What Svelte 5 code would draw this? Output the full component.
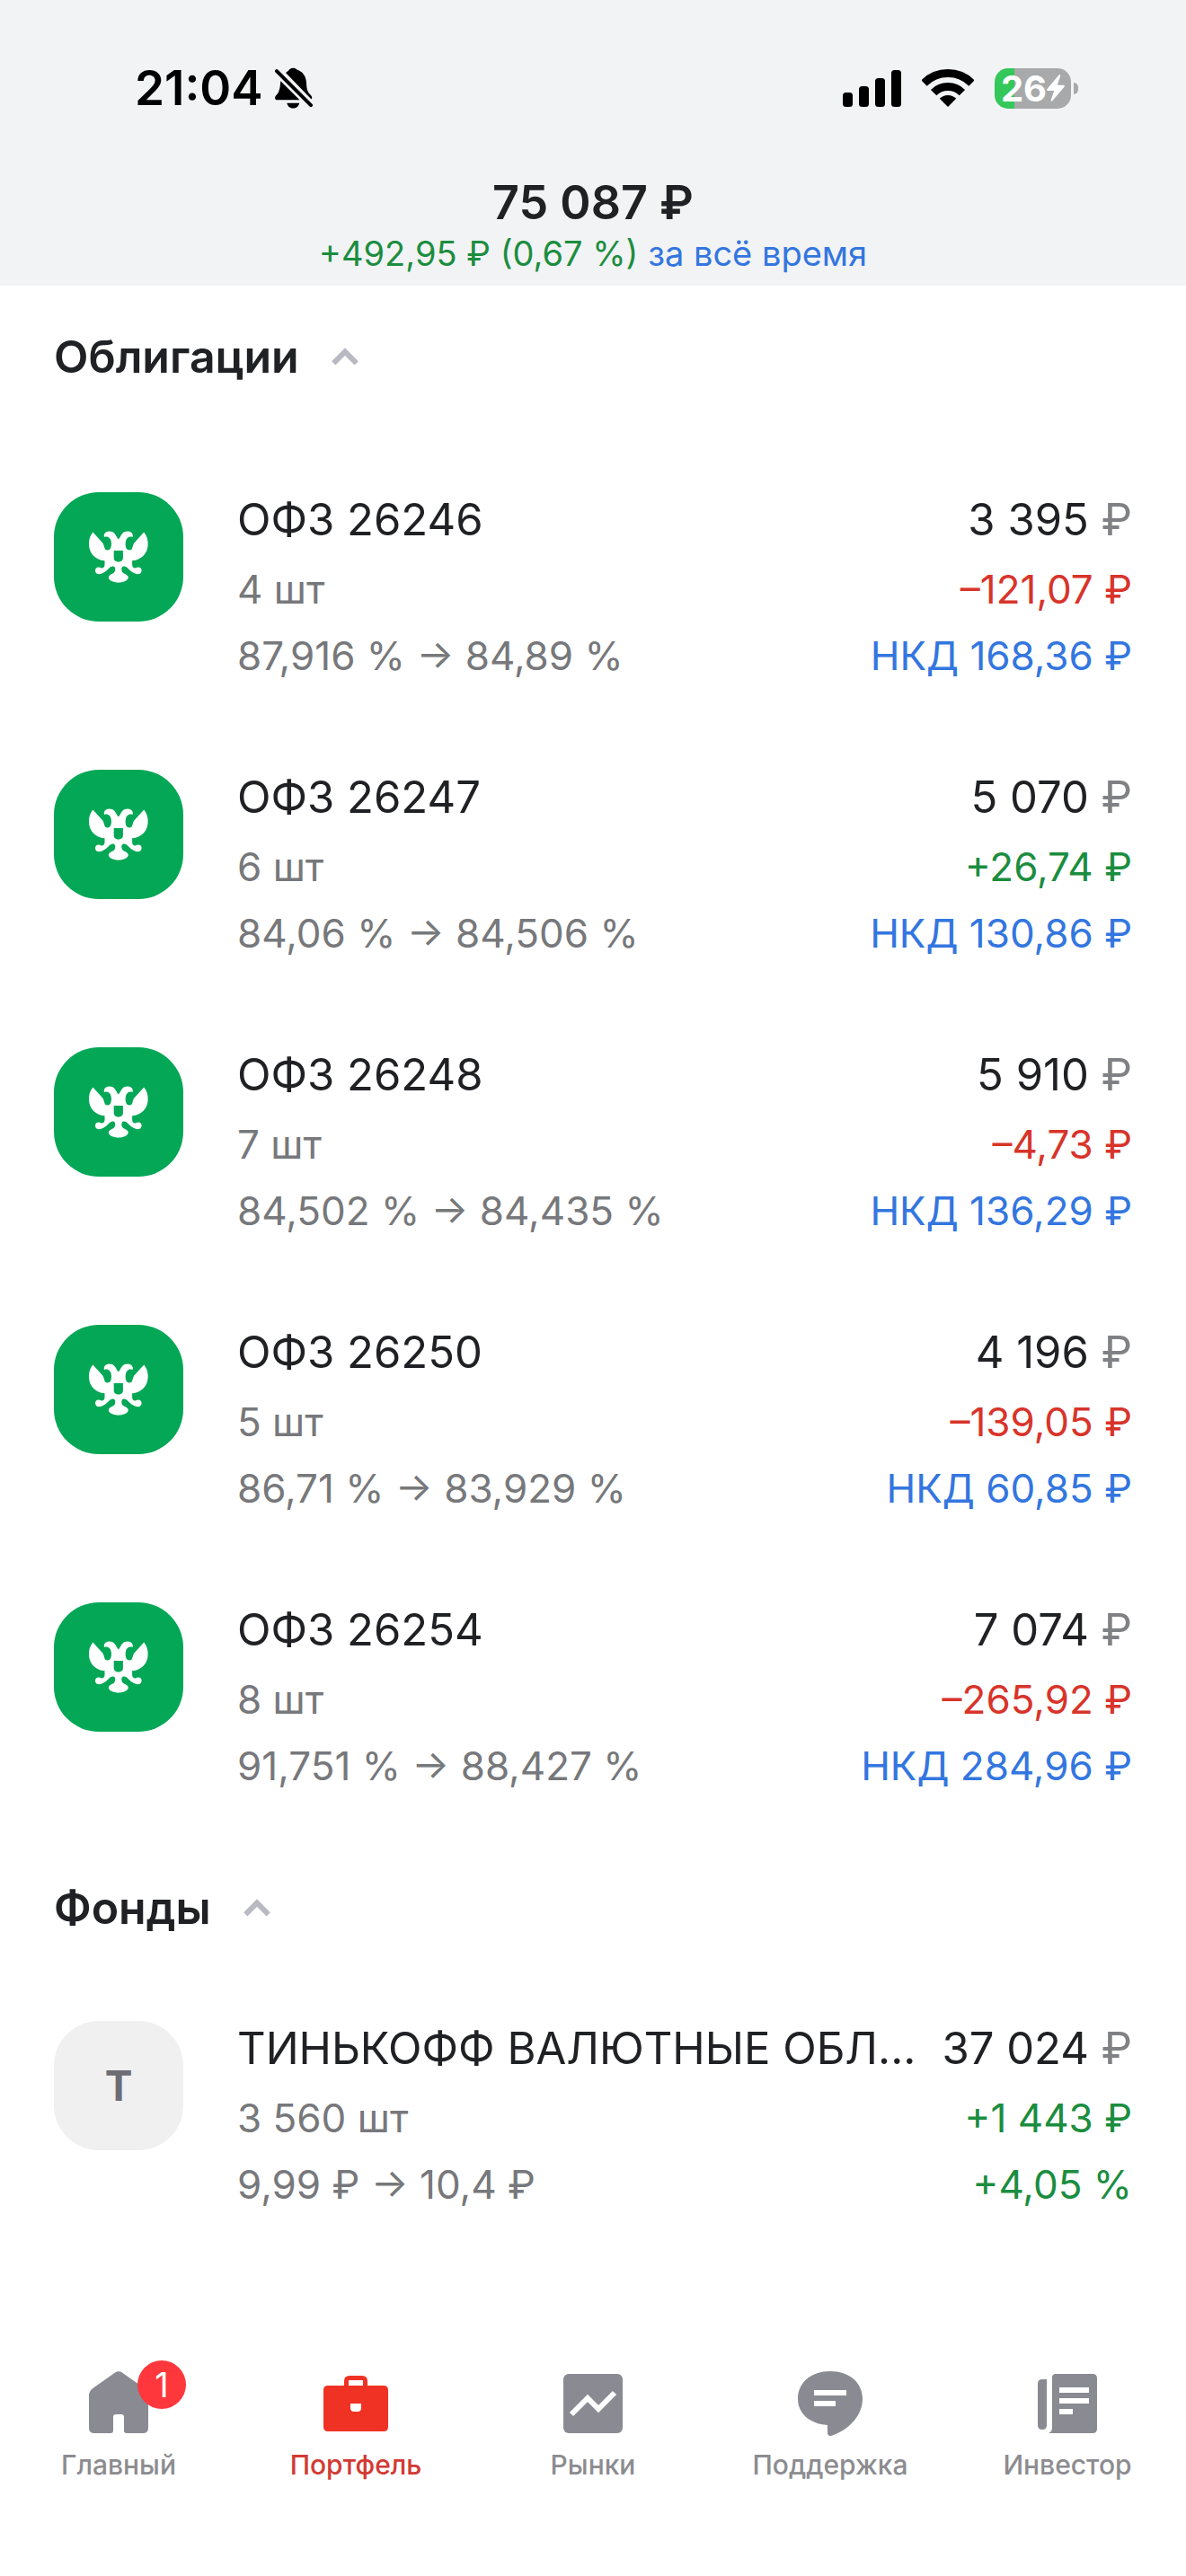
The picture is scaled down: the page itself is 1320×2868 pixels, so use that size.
<script>
  const bonds = [
    { name: 'ОФЗ 26246', count: '4 шт', from: '87,916 %', to: '84,89 %', price: '3 395', diff: '–121,07 ₽', nkd: '168,36' },
    { name: 'ОФЗ 26247', count: '6 шт', from: '84,06 %', to: '84,506 %', price: '5 070', diff: '+26,74 ₽', nkd: '130,86' },
    { name: 'ОФЗ 26248', count: '7 шт', from: '84,502 %', to: '84,435 %', price: '5 910', diff: '–4,73 ₽', nkd: '136,29' },
    { name: 'ОФЗ 26250', count: '5 шт', from: '86,71 %', to: '83,929 %', price: '4 196', diff: '–139,05 ₽', nkd: '60,85' },
    { name: 'ОФЗ 26254', count: '8 шт', from: '91,751 %', to: '88,427 %', price: '7 074', diff: '–265,92 ₽', nkd: '284,96' },
  ]

  const funds = [
    { name: 'ТИНЬКОФФ ВАЛЮТНЫЕ ОБЛ...', letter: 'Т', count: '3 560 шт', from: '9,99 ₽', to: '10,4 ₽', price: '37 024', diff: '+1 443 ₽', percent: '+4,05 %' },
  ]

  const sections = [
    { id: 'bonds', title: 'Облигации', items: bonds },
    { id: 'funds', title: 'Фонды', items: funds },
  ]

  const tabs = [
    { id: 'home', label: 'Главный', badge: 1 },
    { id: 'portfolio', label: 'Портфель' },
    { id: 'markets', label: 'Рынки' },
    { id: 'support', label: 'Поддержка' },
    { id: 'investor', label: 'Инвестор' },
  ]

  let activeTab = $state('portfolio')
  let closed = $state({})
</script>

{#snippet eagleHalf()}
  <path
    d="M52 30.5C50 29 49.5 26 47.5 24C45 21.3 40.5 21 38 22.5C36 23.7 35.3 26 36 28C39.5 26.8 42.5 28.5 43.5 32C44.4 35.5 44 39.5 42.3 41.5C40.7 42.8 38.5 42.8 37.2 41.8C36 40 36 37.5 34.5 34.7L23.4 22.4C20 26.5 18.6 31.5 19 37C19.5 46 26 53.5 36.5 54.3V58.5C36.5 61.2 35 62.8 32.8 62.6C31 61.2 28.5 61 27 62.5C25.3 64.2 25.8 67.5 28 68.8C31.5 70.2 37 67.5 40.5 63.5C42.5 61.2 44.5 60 46.5 60.6C48.8 61.5 48.8 65.5 47 67.5C45.5 69 42.3 69.6 41.2 71.5C40 74 42 76 45 77.3C47 78.2 49.5 78.5 52 78.5V55.8C49 55.5 46.7 54 46.7 51.5V43H52Z"
  />
{/snippet}

<div class="app">
  <header>
    <div class="status">
      <div class="clock">
        <span>21:04</span>
        <svg class="bell" viewBox="186 25 42 46">
          <path d="M198 31C200 29.800 200.800 28.700 202 27.500C204 25.200 208.500 25.200 210.500 27.500C217 29.500 220.500 35 221 42C221.300 49 222 52 225.500 55.500C227.500 57.500 227.800 59 226.500 60.500Z" />
          <path d="M192.300 40.200L213.500 61.300H188.500C186 61.300 185.300 58.500 187 56.500C190.500 53 191.500 50 192.300 40.200Z" />
          <path d="M199.300 64.700H213.200C212 68.800 209.500 70.500 206.200 70.500C203 70.500 200.500 68.800 199.300 64.700Z" />
          <path class="slash" d="M188 29.200L226 67.200" />
        </svg>
      </div>
      <div class="indicators">
        <svg class="signal" viewBox="0 0 65 42">
          <rect x="0" y="26" width="11" height="16" rx="3.500" />
          <rect x="18" y="19" width="11" height="23" rx="3.500" />
          <rect x="36" y="10" width="11" height="32" rx="3.500" />
          <rect x="54" y="1" width="11" height="41" rx="3.500" />
        </svg>
        <svg class="wifi" viewBox="0 0 58 42">
          <path class="arc" d="M2.500 15.500A37.500 37.500 0 0 1 55.500 15.500" />
          <path class="arc" d="M13.100 26.100A22.500 22.500 0 0 1 44.900 26.100" />
          <path d="M29 42L19.800 32.800A13 13 0 0 1 38.200 32.800Z" />
        </svg>
        <div class="battery">
          <div class="charge">
            <span>26</span>
            <svg class="bolt" viewBox="0 0 20 30">
              <path d="M13.500 0.500C14.500 -0.200 15.500 0.500 15.200 1.500L11.800 11.800H18.500C20 11.800 20.200 13 19.300 14L6.300 29.300C5.400 30.200 4.300 29.500 4.700 28.300L8.200 18H1.500C0 18 -0.300 16.700 0.700 15.700Z" />
            </svg>
          </div>
          <div class="nub"></div>
        </div>
      </div>
    </div>
    <h1>75 087 ₽</h1>
    <p class="total">
      <span class="up">+492,95 ₽ (0,67 %)</span>
      <button type="button">за всё время</button>
    </p>
  </header>

  <main>
    {#each sections as section}
      <section class={section.id}>
        <h2>
          <button type="button" onclick={() => (closed[section.id] = !closed[section.id])}>
            {section.title}
            <svg class="chevron" class:down={closed[section.id]} viewBox="0 0 30 20">
              <path d="M2.300 17.300L15 4.600L27.700 17.300" />
            </svg>
          </button>
        </h2>
        {#if !closed[section.id]}
          <ul>
            {#each section.items as item}
              <li>
                {#if item.letter}
                  <div class="logo letter">{item.letter}</div>
                {:else}
                  <svg class="logo" viewBox="-20 -22 144 144">
                    {@render eagleHalf()}
                    <g transform="translate(103.600 0) scale(-1 1)">
                      {@render eagleHalf()}
                    </g>
                  </svg>
                {/if}
                <div class="info">
                  <div class="name">{item.name}</div>
                  <div class="count">{item.count}</div>
                  <div class="rate">{item.from} → {item.to}</div>
                </div>
                <div class="value">
                  <div class="price">{item.price} <span>₽</span></div>
                  <div class="diff" class:up={item.diff[0] === '+'}>{item.diff}</div>
                  {#if item.nkd}
                    <div class="extra">НКД {item.nkd} ₽</div>
                  {:else}
                    <div class="extra up">{item.percent}</div>
                  {/if}
                </div>
              </li>
            {/each}
          </ul>
        {/if}
      </section>
    {/each}
  </main>

  <nav>
    {#each tabs as tab}
      <a href="#{tab.id}" class:active={activeTab === tab.id} onclick={() => (activeTab = tab.id)}>
        <span class="icon">
          <svg viewBox="0 0 72 72">
            {#if tab.id === 'home'}
              <path d="M32.500 1.300Q36 -1 39.500 1.300L64 18.500Q69 22 69 27V63Q69 69 63 69H45Q42 69 42 66V51Q42 48 39 48H33Q30 48 30 51V66Q30 69 27 69H9Q3 69 3 63V27Q3 22 8 18.500Z" />
            {:else if tab.id === 'portfolio'}
              <path
                fill-rule="evenodd"
                d="M23 16V11Q23 5 29 5H43Q49 5 49 11V16H67Q72 16 72 21V62Q72 67 67 67H5Q0 67 0 62V21Q0 16 5 16ZM28 16H44V10H28ZM30 36V41Q30 45 34 45H38Q42 45 42 41V36Z"
              />
            {:else if tab.id === 'markets'}
              <rect x="3" y="3" width="66" height="66" rx="6" />
              <path class="line" d="M12 48L30 30L42 42L60 24" />
            {:else if tab.id === 'support'}
              <path d="M36 0C57 0 72 12.500 72 30.500C72 48 59 64 38.500 71.500Q33 73.500 33 68V60C13 58.500 0 47 0 30.500C0 12.500 15 0 36 0Z" />
              <path class="line" d="M18 24H54M18 36H42" />
            {:else}
              <path d="M23 3H64Q69 3 69 8V64Q69 69 64 69H15Q19 67.500 19 63V7Q19 3 23 3Z" />
              <path d="M13 9V60Q13 65 8 65Q3 65 3 60V14Q3 9 8 9Z" />
              <path class="line" d="M27 21H60M27 33H60M27 45H42" />
            {/if}
          </svg>
          {#if tab.badge}
            <span class="badge">{tab.badge}</span>
          {/if}
        </span>
        {tab.label}
      </a>
    {/each}
  </nav>
</div>

<style>
  :global(body) {
    margin: 0;
    background: #fff;
  }

  .app {
    display: flex;
    flex-direction: column;
    min-height: 100vh;
    font-family: Inter, 'Noto Sans', sans-serif;
    font-size: 44px;
    color: #202124;
  }

  button {
    padding: 0;
    border: 0;
    background: none;
    font: inherit;
    color: inherit;
    cursor: pointer;
  }

  header {
    padding-bottom: 10px;
    background: #f2f3f5;
    text-align: center;
  }

  .status {
    display: flex;
    align-items: center;
    justify-content: space-between;
    height: 196px;
    padding: 0 120px 0 150px;
    box-sizing: border-box;
    color: #000;
  }

  .clock {
    display: flex;
    align-items: center;
    gap: 13px;
    font-size: 53px;
    font-weight: 600;
  }

  .bell {
    width: 42px;
    height: 46px;
  }

  .slash {
    stroke: #000;
    stroke-width: 4;
    stroke-linecap: round;
  }

  .indicators {
    display: flex;
    align-items: center;
    gap: 23px;
  }

  .signal {
    width: 65px;
    height: 42px;
  }

  .wifi {
    width: 58px;
    height: 42px;
  }

  .arc {
    fill: none;
    stroke: #000;
    stroke-width: 9;
  }

  .battery {
    display: flex;
    align-items: center;
    gap: 3px;
  }

  .charge {
    display: flex;
    align-items: center;
    justify-content: center;
    width: 85px;
    height: 45px;
    border-radius: 15px;
    background: linear-gradient(to right, #34c759 26%, #a8a9ab 26%);
    color: #fff;
    font-size: 40px;
    font-weight: 700;
  }

  .bolt {
    width: 20px;
    height: 30px;
    fill: #fff;
  }

  .nub {
    width: 5px;
    height: 13px;
    border-radius: 0 6px 6px 0;
    background: #a8a9ab;
  }

  h1 {
    margin: 0;
    font-size: 52px;
    line-height: 60px;
    font-weight: 600;
  }

  .total {
    margin: 0;
    font-size: 38px;
    line-height: 52px;
  }

  .total button {
    color: #3376e0;
  }

  section {
    padding: 0 60px;
  }

  h2 {
    margin: 0;
    font-size: 50px;
    line-height: 60px;
    font-weight: 600;
  }

  h2 button {
    display: flex;
    align-items: center;
    gap: 36px;
  }

  .chevron {
    width: 30px;
    height: 20px;
    fill: none;
    stroke: #b9bac1;
    stroke-width: 6;
  }

  .down {
    transform: rotate(180deg);
  }

  ul {
    display: flex;
    flex-direction: column;
    gap: 99px;
    margin: 0;
    padding: 0;
    list-style: none;
  }

  .bonds {
    padding-top: 49px;
    padding-bottom: 100px;
  }

  .bonds ul {
    padding-top: 121px;
  }

  .funds ul {
    padding-top: 96px;
  }

  li {
    display: flex;
    align-items: flex-start;
  }

  .logo {
    flex: none;
    width: 144px;
    height: 144px;
    margin-right: 60px;
    border-radius: 50px;
    background: #04a755;
    fill: #fff;
  }

  .letter {
    background: #f0f0f1;
    color: #6c6d75;
    font-size: 46px;
    line-height: 144px;
    font-weight: 700;
    text-align: center;
  }

  .info {
    flex: 1;
    min-width: 0;
    color: #77787b;
  }

  .value {
    flex: none;
    margin-left: 20px;
    text-align: right;
  }

  .name,
  .price {
    font-size: 49px;
    line-height: 62px;
    color: #202124;
    white-space: nowrap;
  }

  .name {
    overflow: hidden;
    text-overflow: ellipsis;
  }

  .price span {
    color: #808184;
  }

  .count,
  .diff {
    margin: 15px 0;
    line-height: 62px;
  }

  .rate,
  .extra {
    line-height: 56px;
  }

  .diff {
    color: #d8342a;
  }

  .extra {
    color: #3376e0;
  }

  .up {
    color: #1b8d3f;
  }

  nav {
    display: flex;
    margin-top: auto;
    padding-bottom: 104px;
  }

  nav a {
    display: flex;
    flex: 1;
    flex-direction: column;
    align-items: center;
    gap: 12px;
    font-size: 30px;
    line-height: 40px;
    font-weight: 500;
    color: #8c8c90;
    text-decoration: none;
  }

  .icon {
    position: relative;
    width: 72px;
    height: 72px;
    fill: #8a8a93;
  }

  .icon svg {
    display: block;
  }

  .line {
    fill: none;
    stroke: #fff;
    stroke-width: 6;
  }

  .active {
    color: #d23a33;
  }

  .active .icon {
    fill: #f03224;
  }

  .badge {
    position: absolute;
    top: -12px;
    left: 57px;
    width: 54px;
    height: 54px;
    border-radius: 50%;
    background: #fd373c;
    color: #fff;
    font-size: 38px;
    line-height: 54px;
    font-weight: 400;
    text-align: center;
  }
</style>
